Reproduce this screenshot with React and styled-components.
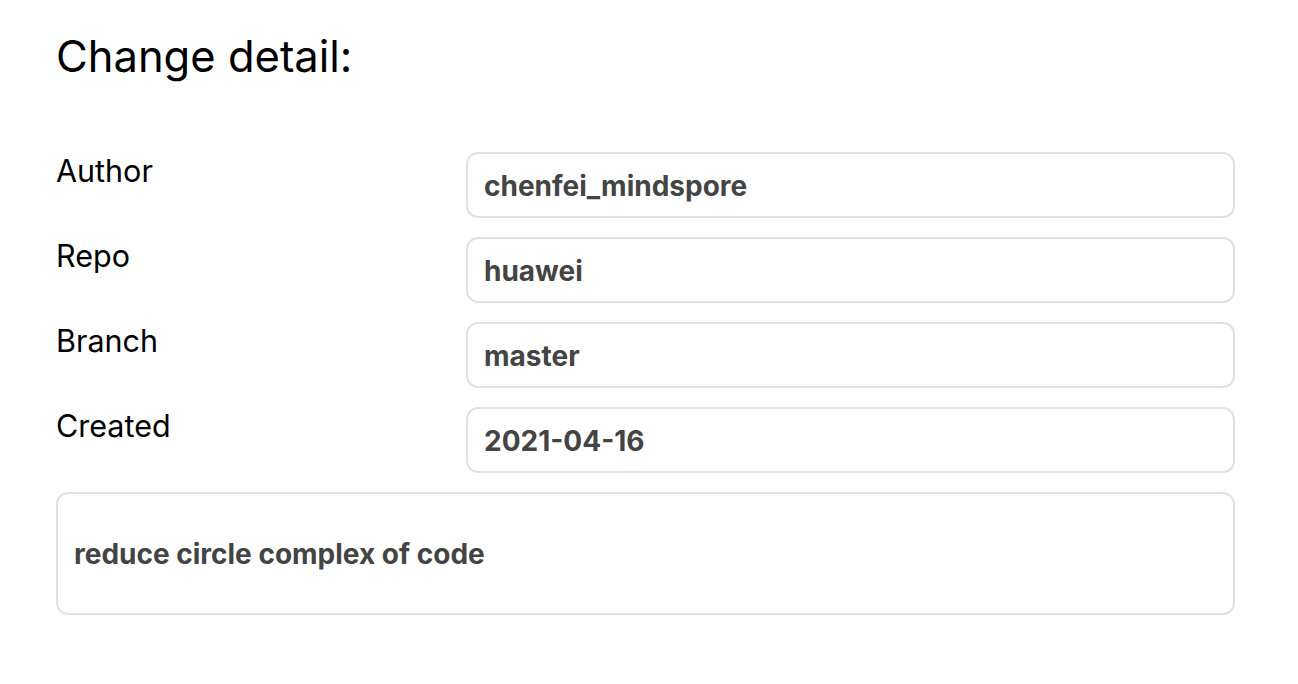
import React from 'react'
import styled, { createGlobalStyle } from 'styled-components'

const GlobalStyle = createGlobalStyle`
  body {
    margin: 0;
    background: #fff;
    font-family: Inter, "Noto Sans", "Liberation Sans", sans-serif;
  }
`

const fields = [
  { label: 'Author', value: 'chenfei_mindspore' },
  { label: 'Repo', value: 'huawei' },
  { label: 'Branch', value: 'master' },
  { label: 'Created', value: '2021-04-16' },
]

const App = () => {
  return (
    <>
      <GlobalStyle />
      <Page>
        <Title>Change detail:</Title>
        <Details>
          {fields.map((field) => (
            <Row key={field.label}>
              <Label>{field.label}</Label>
              <ValueBox>{field.value}</ValueBox>
            </Row>
          ))}
          <MessageBox>reduce circle complex of code</MessageBox>
        </Details>
      </Page>
    </>
  )
}

const Page = styled.div`
  padding: 32px 63px 0 56px;
`

const Title = styled.h1`
  margin: 0;
  font-size: 43.5px;
  line-height: 48px;
  font-weight: 400;
  color: #000;
`

const Details = styled.div`
  margin-top: 72px;
  display: flex;
  flex-direction: column;
  gap: 19px;
`

const Row = styled.div`
  display: grid;
  grid-template-columns: 410px 1fr;
  align-items: start;
`

const Label = styled.div`
  padding-top: 2px;
  font-size: 30.5px;
  line-height: 34px;
  color: #000;
`

const ValueBox = styled.div`
  box-sizing: border-box;
  height: 66px;
  border: 2px solid #e1e1e1;
  border-radius: 12px;
  padding: 1px 16px 0;
  display: flex;
  align-items: center;
  font-size: 28px;
  font-weight: 700;
  color: #444;
`

const MessageBox = styled(ValueBox)`
  height: 123px;
`

export default App
